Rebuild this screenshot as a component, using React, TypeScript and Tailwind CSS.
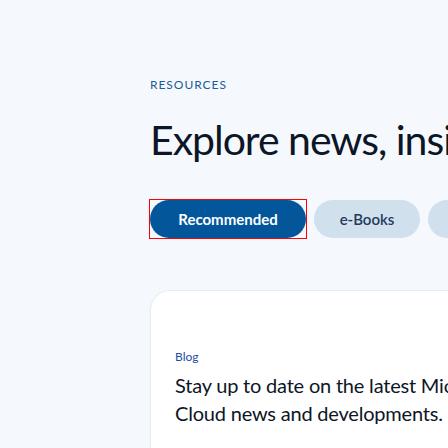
import React from "react";

const tabs = ["Recommended", "e-Books", "Videos"];

export default function App() {
  return (
    <div className="w-[448px] h-[448px] overflow-hidden bg-[#f5f9fd] font-['Lato','Noto_Sans',sans-serif]">
      <div className="w-[900px] pl-[150px] pt-[76px]">
        <p className="text-[12px] leading-[18px] tracking-[0.08em] text-[#1b5b99]">RESOURCES</p>
        <h1 className="mt-[20px] text-[41px] leading-[52px] font-normal tracking-[-0.025em] text-[#0d1626] whitespace-nowrap">
          Explore news, insights, and resources
        </h1>
        <div className="mt-[34px] flex items-center gap-[8px]">
          {tabs.map((t, i) => (
            <span key={t} className={i === 0 ? "outline outline-1 outline-[#ff0000]" : ""}>
              <button
                className={
                  i === 0
                    ? "h-[38px] w-[156px] rounded-full bg-[#03569a] text-white text-[15px] font-bold"
                    : "h-[38px] w-[106px] rounded-full bg-[#d0e0ec] text-[#243a5e] text-[15px] font-semibold"
                }
              >
                {t}
              </button>
            </span>
          ))}
        </div>
        <div className="mt-[52px] w-[600px] h-[300px] rounded-[20px] bg-white border border-[#e6ecf2] shadow-[0_1px_3px_rgba(0,0,0,0.04)] px-[24px] pt-[58px]">
          <p className="text-[12px] leading-[16px] text-[#1c4fa0]">Blog</p>
          <p className="mt-[6px] w-[340px] text-[20px] leading-[28px] tracking-[-0.01em] text-[#0d1626]">
            Stay up to date on the latest Microsoft Cloud news and developments.
          </p>
        </div>
      </div>
    </div>
  );
}
